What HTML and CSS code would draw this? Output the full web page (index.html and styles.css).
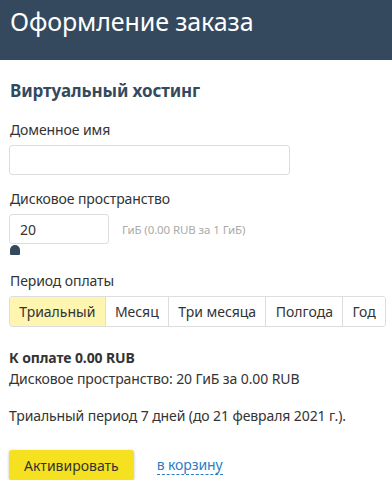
FILE: index.html
```html
<!DOCTYPE html>
<html lang="ru">
<head>
    <meta charset="UTF-8">
    <meta name="viewport" content="width=device-width, initial-scale=1.0">
    <title>Оформление заказа</title>
    <link rel="stylesheet" href="styles.css">
</head>
<body>
    <div class="page-header">
        <h1>Оформление заказа</h1>
    </div>

    <div class="order">
        <h2>Виртуальный хостинг</h2>

        <div class="form-group">
            <label for="domain">Доменное имя</label>
            <input type="text" id="domain" class="input-domain">
        </div>

        <div class="form-group disk-group">
            <label for="disk">Дисковое пространство</label>
            <div class="disk-row">
                <input type="text" id="disk" class="input-disk" value="20">
                <span class="hint">ГиБ (0.00 RUB за 1 ГиБ)</span>
            </div>
            <div class="slider">
                <span class="slider-thumb"></span>
            </div>
        </div>

        <div class="form-group">
            <label>Период оплаты</label>
            <div class="periods">
                <button class="period active">Триальный</button>
                <button class="period">Месяц</button>
                <button class="period">Три месяца</button>
                <button class="period">Полгода</button>
                <button class="period">Год</button>
            </div>
        </div>

        <div class="summary">
            <div class="total">К оплате 0.00 RUB</div>
            <div>Дисковое пространство: 20 ГиБ за 0.00 RUB</div>
        </div>

        <p class="trial-note">Триальный период 7 дней (до 21 февраля 2021 г.).</p>

        <div class="actions">
            <button class="btn-activate">Активировать</button>
            <a href="#" class="cart-link">в корзину</a>
        </div>
    </div>
</body>
</html>
```

FILE: styles.css
```css
body {
    font-family: "Noto Sans", "Open Sans", sans-serif;
    font-size: 14px;
    letter-spacing: -0.1px;
    color: #333;
    margin: 0;
    background: #fff;
}
.page-header {
    background-color: #34495e;
    height: 60px;
    padding: 0 10px;
}
.page-header h1 {
    margin: 0;
    color: #fff;
    font-size: 25px;
    font-weight: 400;
    line-height: 42px;
}
.order {
    padding: 0 9px;
}
h2 {
    margin: 19px 1px 17px;
    font-size: 17px;
    font-weight: 700;
    color: #34495e;
    line-height: 24px;
}
.form-group {
    margin-bottom: 14px;
}
.disk-group {
    margin-bottom: 16px;
}
.form-group label {
    display: block;
    margin: 0 1px 5px;
    line-height: 20px;
}
.form-group input {
    box-sizing: border-box;
    height: 30px;
    border: 1px solid #ddd;
    border-radius: 3px;
    padding: 0 10px;
    font: inherit;
    color: #333;
}
.input-domain {
    width: 281px;
}
.disk-row {
    display: flex;
    align-items: center;
    gap: 13px;
}
.input-disk {
    width: 100px;
}
.hint {
    font-size: 11.5px;
    color: #aaa;
}
.slider {
    height: 11px;
    position: relative;
}
.slider-thumb {
    position: absolute;
    left: 1px;
    top: 1px;
    width: 10px;
    height: 10px;
    background: #34495e;
    border-radius: 5px 5px 1px 1px;
}
.periods {
    display: flex;
    width: 377px;
    border: 1px solid #ddd;
    border-radius: 3px;
    overflow: hidden;
    box-sizing: border-box;
}
.period {
    font: inherit;
    color: #333;
    background: #fff;
    border: none;
    border-left: 1px solid #ddd;
    height: 29px;
    padding: 0 8px;
    white-space: nowrap;
    flex: auto;
}
.period:first-child {
    border-left: none;
}
.period.active {
    background: #fdf5b0;
}
.summary {
    margin-top: 20px;
    line-height: 21px;
}
.total {
    font-weight: 700;
}
.trial-note {
    margin: 17px 0 24px;
    line-height: 20px;
}
.actions {
    display: flex;
    align-items: center;
    gap: 23px;
}
.btn-activate {
    font: inherit;
    color: #333;
    background: #f5e11f;
    border: none;
    border-radius: 3px;
    height: 30px;
    padding: 0 15px;
    box-shadow: 0 1px 3px rgba(0, 0, 0, 0.25);
}
.cart-link {
    color: #2a80c4;
    text-decoration: none;
    border-bottom: 1px dashed #2a80c4;
    line-height: 18px;
}
```
